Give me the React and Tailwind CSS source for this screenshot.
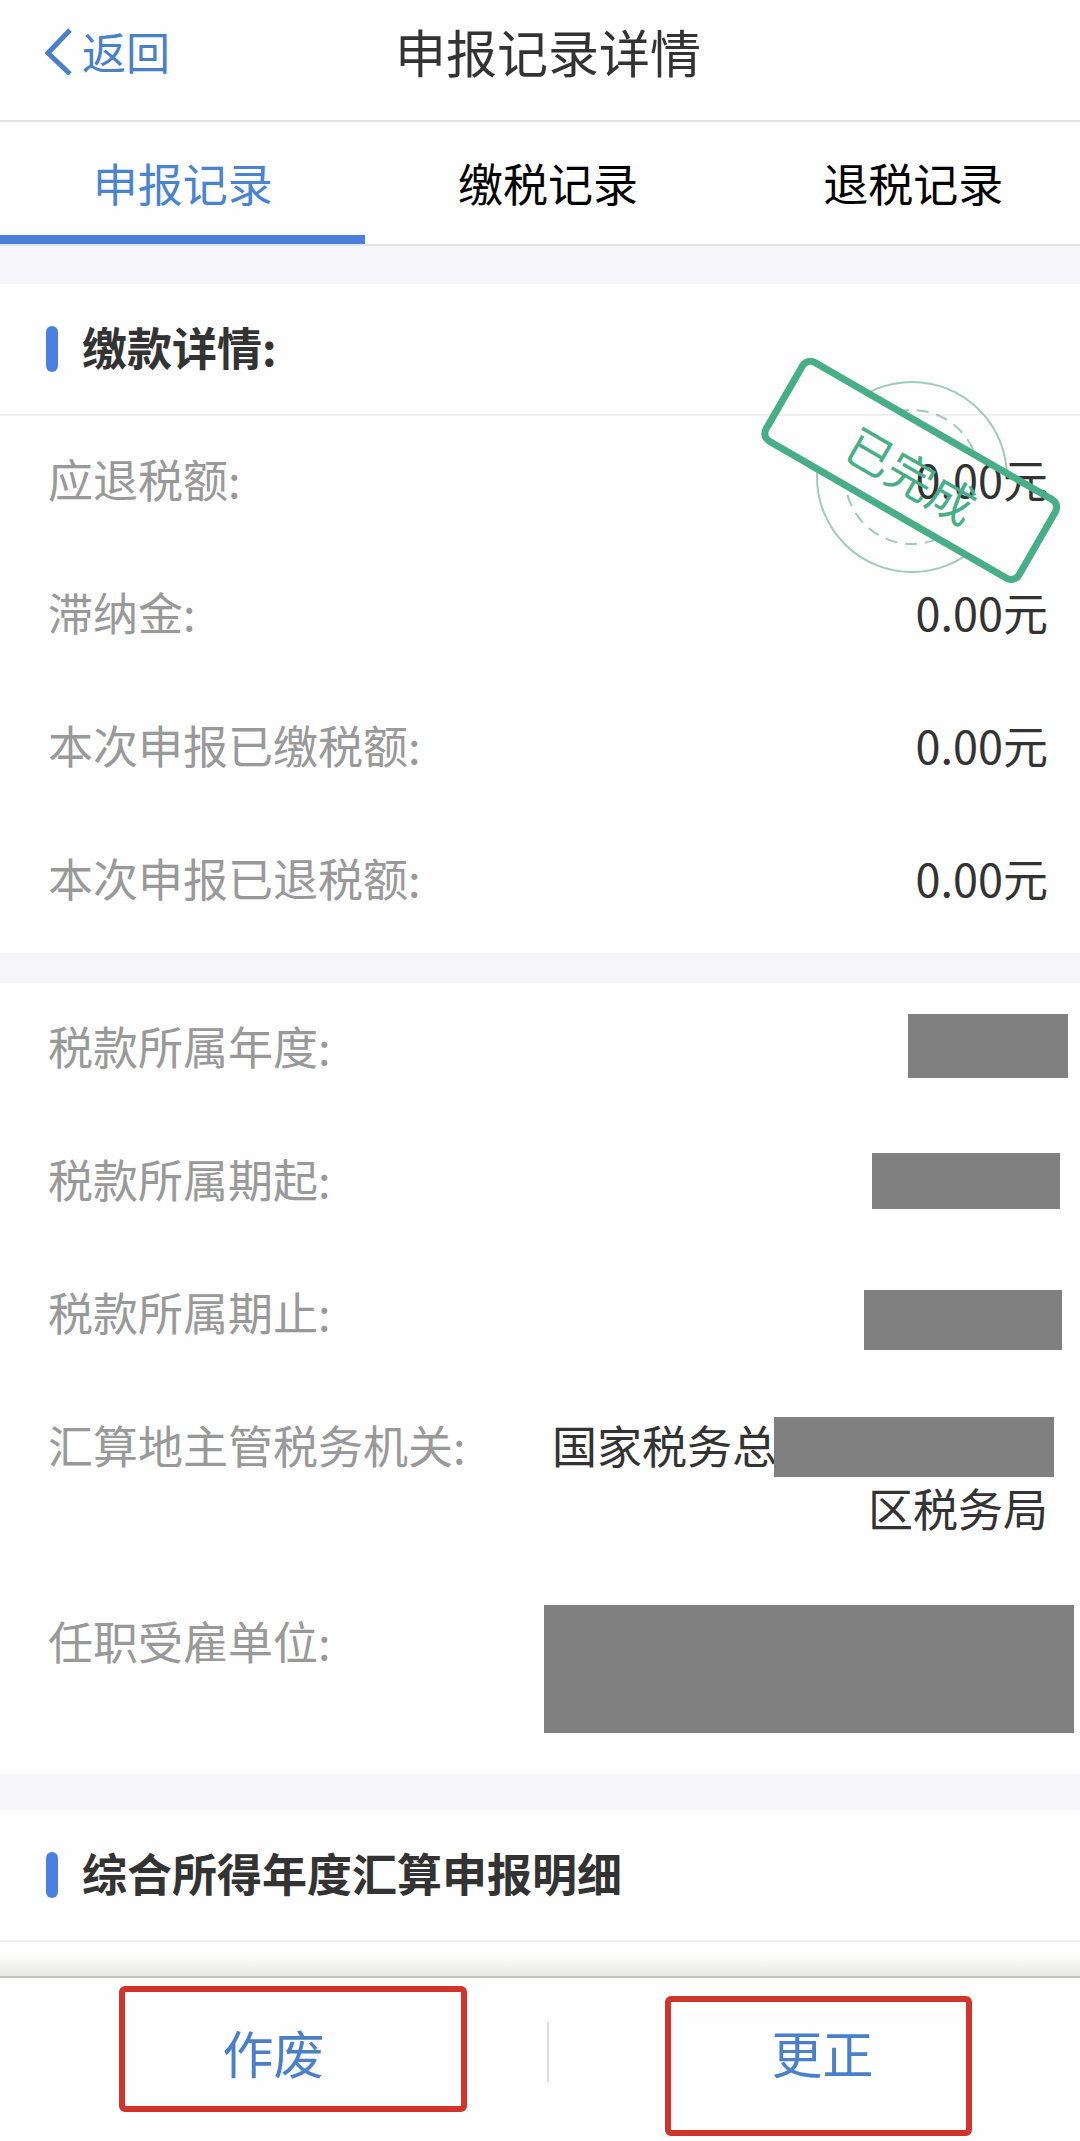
const tabs = ['申报记录', '缴税记录', '退税记录'];

const amounts = [
  { label: '应退税额:', value: '0.00元' },
  { label: '滞纳金:', value: '0.00元' },
  { label: '本次申报已缴税额:', value: '0.00元' },
  { label: '本次申报已退税额:', value: '0.00元' },
];

// mask: grey block that hides a private value
const details = [
  { label: '税款所属年度:', lines: [''], mask: 'top-0 -right-5 w-40 h-16' },
  { label: '税款所属期起:', lines: [''], mask: 'top-1.5 -right-3 w-[188px] h-14' },
  { label: '税款所属期止:', lines: [''], mask: 'top-2.5 -right-3.5 w-[198px] h-15' },
  {
    label: '汇算地主管税务机关:',
    lines: ['国家税务总局', '区税务局'],
    mask: 'top-1 -right-1.5 w-70 h-15',
  },
  { label: '任职受雇单位:', lines: ['', ''], mask: '-top-1 -right-6.5 w-[530px] h-32' },
];

function SectionTitle({ children }) {
  return (
    <h2 className="flex items-center gap-6 h-[132px] pl-[46px] border-b-2 border-[#efefef] font-bold text-[#333]">
      <span className="w-3 h-[46px] rounded-full bg-[#4a80e0]" />
      <span className="pb-1.5">{children}</span>
    </h2>
  );
}

function Stamp() {
  return (
    <svg
      viewBox="0 0 300 230"
      className="pointer-events-none absolute top-[355px] right-[35px] z-10 w-[300px] h-[230px]"
      fill="none"
      stroke="#48ae87"
    >
      <mask id="outside">
        <rect width="300" height="230" fill="#fff" stroke="none" />
        <rect
          x="4"
          y="70"
          width="292"
          height="91"
          rx="9"
          fill="#000"
          stroke="none"
          transform="rotate(30 150 115)"
        />
      </mask>
      <g mask="url(#outside)" stroke="#9fcbb9" strokeWidth="2">
        <circle cx="151" cy="122" r="95" />
        <circle cx="151" cy="122" r="67" strokeDasharray="12 8" />
      </g>
      <g transform="rotate(30 150 115)">
        <rect x="4" y="70" width="292" height="91" rx="9" strokeWidth="7" />
        <text
          x="153"
          y="138"
          textAnchor="middle"
          fontSize="47"
          fill="#48ae87"
          stroke="none"
        >
          已完成
        </text>
      </g>
    </svg>
  );
}

export default function App() {
  return (
    <div className="min-h-screen overflow-hidden bg-[#fefefe] font-['Noto_Sans_CJK_SC',sans-serif] text-[45px] leading-[63px] text-[#333]">
      <div className="relative -mr-4">
        <header className="relative flex items-center justify-center h-[122px] pb-[18px] border-b-2 border-[#e4e4e4]">
          <a href="#back" className="absolute left-[44px] flex items-center gap-2.5 text-[44px] text-[#4a7fc9]">
            <svg viewBox="0 0 28 48" className="w-7 h-12" fill="none" stroke="currentColor" strokeWidth="5">
              <path d="M26 3 4 26l22 21" />
            </svg>
            返回
          </a>
          <h1 className="text-[51px]">申报记录详情</h1>
        </header>

        <nav className="grid grid-cols-3 h-[124px] border-b-2 border-[#e4e4e4]">
          {tabs.map((tab, i) => (
            <button
              key={tab}
              className={
                i === 0
                  ? 'pt-2 border-b-9 border-[#4a7fdc] text-[#4a83cf]'
                  : 'pt-2 border-b-9 border-transparent text-black'
              }
            >
              {tab}
            </button>
          ))}
        </nav>

        <main>
          <div className="h-[38px] bg-[#f6f6fa]" />
          <Stamp />
          <section className="pb-[5px]">
            <SectionTitle>缴款详情:</SectionTitle>
            <dl>
              {amounts.map((row) => (
                <div key={row.label} className="flex justify-between px-12 pt-[31px] pb-[39px]">
                  <dt className="text-[#999]">{row.label}</dt>
                  <dd>{row.value}</dd>
                </div>
              ))}
            </dl>
          </section>

          <section className="border-y-[#f6f6fa] border-t-30 border-b-36">
            <dl>
              {details.map((row) => (
                <div key={row.label} className="flex justify-between px-12 pt-[31px] pb-[39px]">
                  <dt className="text-[#999]">{row.label}</dt>
                  <dd className="relative w-[496px]">
                    {row.lines.map((line, i) => (
                      <p key={i} className={i === 0 ? 'h-[63px]' : 'h-[63px] text-right'}>
                        {line}
                      </p>
                    ))}
                    <span className={`absolute bg-[#808080] ${row.mask}`} />
                  </dd>
                </div>
              ))}
            </dl>
          </section>

          <section>
            <SectionTitle>综合所得年度汇算申报明细</SectionTitle>
            <div className="h-[34px] bg-linear-to-b from-[#fefefe] from-40% to-[#e6e6e4]" />
          </section>
        </main>

        <footer className="relative flex items-center h-[164px] pb-3.5 border-t-2 border-[#c4c4c4] text-[51px] text-[#4a7fc9]">
          <button className="flex-1">作废</button>
          <span className="w-[2px] h-15 bg-[#dcdcdc]" />
          <button className="flex-1">更正</button>
          <span className="pointer-events-none absolute top-2 left-[119px] w-[348px] h-[126px] border-6 border-[#d0342a] rounded-md" />
          <span className="pointer-events-none absolute top-[18px] left-[665px] w-[307px] h-[140px] border-6 border-[#d0342a] rounded-md" />
        </footer>
      </div>
    </div>
  );
}
